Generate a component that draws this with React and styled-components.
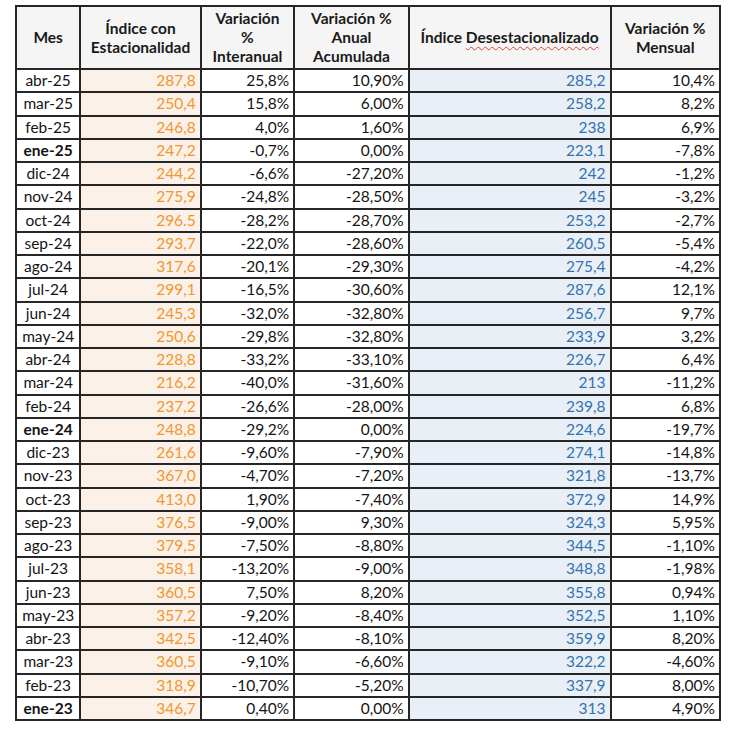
import React from 'react';
import styled, { createGlobalStyle } from 'styled-components';

const GlobalStyle = createGlobalStyle`
  body {
    margin: 0;
    background: #ffffff;
    font-family: Lato, "Open Sans", "Liberation Sans", sans-serif;
  }
`;

const Page = styled.div`
  padding: 5px 0 0 15px;
`;

const Table = styled.table`
  border-collapse: collapse;
  table-layout: fixed;
  width: 706px;
  border: 2px solid #262626;
  font-size: 15.5px;
  color: #111;
`;

const HeadCell = styled.th`
  height: 61px;
  padding: 0 2px;
  background: #f5f5f5;
  border: 2px solid #262626;
  font-weight: 700;
  font-size: 15.5px;
  line-height: 19px;
  text-align: center;
  vertical-align: middle;
  color: #1a1a1a;
`;

const Squiggle = styled.span`
  text-decoration: underline wavy #e0403a;
  text-decoration-thickness: 1px;
  text-underline-offset: 3px;
`;

const Cell = styled.td`
  height: 21.25px;
  padding: 0 4px 0 4px;
  border: 2px solid #262626;
  line-height: 19px;
  text-align: ${p => (p.$center ? 'center' : 'right')};
  font-weight: ${p => (p.$bold ? 700 : 400)};
  background: ${p => p.$bg || '#ffffff'};
  color: ${p => p.$color || '#141414'};
  white-space: nowrap;
`;

const columns = [
  { w: 64, label: ['Mes'] },
  { w: 120, label: ['Índice con', 'Estacionalidad'] },
  { w: 93, label: ['Variación', '%', 'Interanual'] },
  { w: 114, label: ['Variación %', 'Anual', 'Acumulada'] },
  { w: 201, label: null },
  { w: 109, label: ['Variación %', 'Mensual'] },
];

const rows = [
  ['abr-25', '287,8', '25,8%', '10,90%', '285,2', '10,4%'],
  ['mar-25', '250,4', '15,8%', '6,00%', '258,2', '8,2%'],
  ['feb-25', '246,8', '4,0%', '1,60%', '238', '6,9%'],
  ['ene-25', '247,2', '-0,7%', '0,00%', '223,1', '-7,8%', true],
  ['dic-24', '244,2', '-6,6%', '-27,20%', '242', '-1,2%'],
  ['nov-24', '275,9', '-24,8%', '-28,50%', '245', '-3,2%'],
  ['oct-24', '296.5', '-28,2%', '-28,70%', '253,2', '-2,7%'],
  ['sep-24', '293,7', '-22,0%', '-28,60%', '260,5', '-5,4%'],
  ['ago-24', '317,6', '-20,1%', '-29,30%', '275,4', '-4,2%'],
  ['jul-24', '299,1', '-16,5%', '-30,60%', '287,6', '12,1%'],
  ['jun-24', '245,3', '-32,0%', '-32,80%', '256,7', '9,7%'],
  ['may-24', '250,6', '-29,8%', '-32,80%', '233,9', '3,2%'],
  ['abr-24', '228,8', '-33,2%', '-33,10%', '226,7', '6,4%'],
  ['mar-24', '216,2', '-40,0%', '-31,60%', '213', '-11,2%'],
  ['feb-24', '237,2', '-26,6%', '-28,00%', '239,8', '6,8%'],
  ['ene-24', '248,8', '-29,2%', '0,00%', '224,6', '-19,7%', true],
  ['dic-23', '261,6', '-9,60%', '-7,90%', '274,1', '-14,8%'],
  ['nov-23', '367,0', '-4,70%', '-7,20%', '321,8', '-13,7%'],
  ['oct-23', '413,0', '1,90%', '-7,40%', '372,9', '14,9%'],
  ['sep-23', '376,5', '-9,00%', '9,30%', '324,3', '5,95%'],
  ['ago-23', '379,5', '-7,50%', '-8,80%', '344,5', '-1,10%'],
  ['jul-23', '358,1', '-13,20%', '-9,00%', '348,8', '-1,98%'],
  ['jun-23', '360,5', '7,50%', '8,20%', '355,8', '0,94%'],
  ['may-23', '357,2', '-9,20%', '-8,40%', '352,5', '1,10%'],
  ['abr-23', '342,5', '-12,40%', '-8,10%', '359,9', '8,20%'],
  ['mar-23', '360,5', '-9,10%', '-6,60%', '322,2', '-4,60%'],
  ['feb-23', '318,9', '-10,70%', '-5,20%', '337,9', '8,00%'],
  ['ene-23', '346,7', '0,40%', '0,00%', '313', '4,90%', true],
];

export default function App() {
  return (
    <Page>
      <GlobalStyle />
      <Table>
        <colgroup>
          {columns.map((c, i) => (
            <col key={i} style={{ width: c.w }} />
          ))}
        </colgroup>
        <thead>
          <tr>
            {columns.map((c, i) => (
              <HeadCell key={i}>
                {c.label ? (
                  c.label.map((l, j) => <div key={j}>{l}</div>)
                ) : (
                  <span>
                    Índice <Squiggle>Desestacionalizado</Squiggle>
                  </span>
                )}
              </HeadCell>
            ))}
          </tr>
        </thead>
        <tbody>
          {rows.map(r => (
            <tr key={r[0]}>
              <Cell $center $bold={r[6]}>{r[0]}</Cell>
              <Cell $bg="#fbf1e8" $color="#f0972f">{r[1]}</Cell>
              <Cell>{r[2]}</Cell>
              <Cell>{r[3]}</Cell>
              <Cell $bg="#e9eff7" $color="#3473ad">{r[4]}</Cell>
              <Cell>{r[5]}</Cell>
            </tr>
          ))}
        </tbody>
      </Table>
    </Page>
  );
}
